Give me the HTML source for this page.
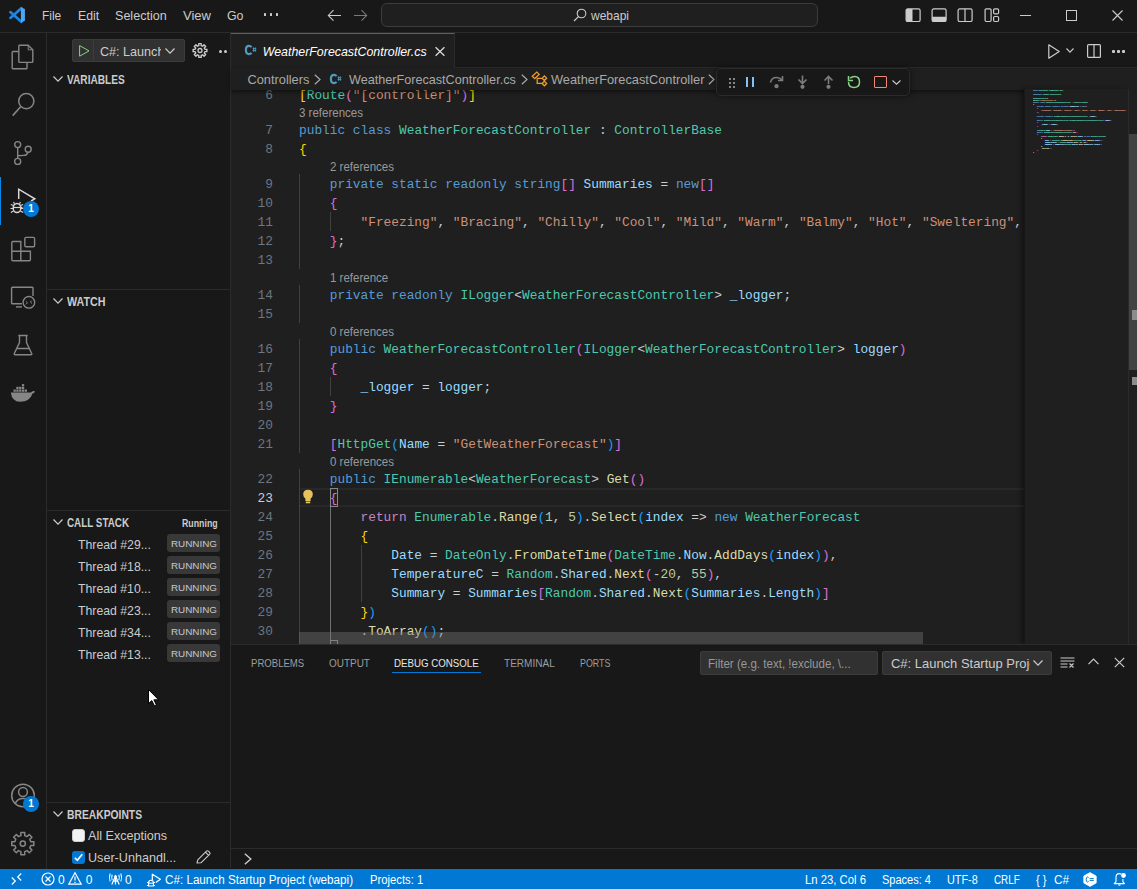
<!DOCTYPE html>
<html><head><meta charset="utf-8"><title>VS Code</title><style>
*{box-sizing:border-box;margin:0;padding:0}
html,body{width:1137px;height:889px;overflow:hidden;background:#181818}
body{position:relative;font-family:"Liberation Sans",sans-serif;color:#cccccc}
.a{position:absolute}
.t{position:absolute;white-space:pre;line-height:1}
svg{position:absolute;overflow:visible}
.code{position:absolute;left:0;white-space:pre;font-family:"Liberation Mono",monospace;font-size:12.82px;line-height:19px;color:#cccccc;height:19px}
.ln{position:absolute;width:40px;text-align:right;font-family:"Liberation Mono",monospace;font-size:12.82px;line-height:19px;color:#6e7681}
.mm{position:absolute;left:0;white-space:pre;font-family:'Liberation Mono',monospace;font-size:1.667px;line-height:2px;height:2px;font-weight:bold;opacity:1;text-shadow:0 0.25px 0 currentColor}
.lens{position:absolute;font-size:11.5px;color:#999999;line-height:16px;white-space:pre}
.k{color:#569cd6}.ty{color:#4ec9b0}.s{color:#ce9178}.v{color:#9cdcfe}.m{color:#dcdcaa}.p{color:#cccccc}
.c{color:#c586c0}.b1{color:#ffd700}.b2{color:#da70d6}.b3{color:#179fff}.n{color:#b5cea8}
</style></head>
<body>
<div class="a" style="left:0;top:0;width:1137px;height:32px;background:#181818"></div>
<div class="a" style="left:0;top:32px;width:1137px;height:1px;background:#2b2b2b"></div>
<svg style="left:0;top:0" width="34" height="30" viewBox="0 0 34 30"><path d="M21.3 8.2L10.4 17.9M21.3 21.8L10.4 12.1" stroke="#1a85e6" stroke-width="2.7" stroke-linecap="round" fill="none"/><path d="M20.9 7.2L24.9 8.9V20.8L20.9 22.7Z" fill="#48a9f2"/></svg>
<div class="t" style="left:42.00px;top:9.96px;font-size:12.8px;color:#cccccc;transform:scaleX(0.9310);transform-origin:0 0;">File</div>
<div class="t" style="left:77.80px;top:9.96px;font-size:12.8px;color:#cccccc;transform:scaleX(0.9612);transform-origin:0 0;">Edit</div>
<div class="t" style="left:115.30px;top:9.96px;font-size:12.8px;color:#cccccc;transform:scaleX(0.9819);transform-origin:0 0;">Selection</div>
<div class="t" style="left:183.00px;top:9.96px;font-size:12.8px;color:#cccccc;transform:scaleX(1.0177);transform-origin:0 0;">View</div>
<div class="t" style="left:226.50px;top:9.96px;font-size:12.8px;color:#cccccc;transform:scaleX(0.9664);transform-origin:0 0;">Go</div>
<div class="a" style="left:264.0px;top:13.4px;width:2.4px;height:2.6px;border-radius:0.6px;background:#cccccc"></div>
<div class="a" style="left:269.9px;top:13.4px;width:2.4px;height:2.6px;border-radius:0.6px;background:#cccccc"></div>
<div class="a" style="left:275.8px;top:13.4px;width:2.4px;height:2.6px;border-radius:0.6px;background:#cccccc"></div>
<svg style="left:327px;top:9px" width="14" height="14" viewBox="0 0 14 14"><path d="M14 6.4H1.5M6.5 1.2L1.3 6.4L6.5 11.6" stroke="#cccccc" stroke-width="1.05" fill="none"/></svg>
<svg style="left:354px;top:9px" width="14" height="14" viewBox="0 0 14 14"><path d="M0 6.4H12.5M7.5 1.2L12.7 6.4L7.5 11.6" stroke="#7a7a7a" stroke-width="1.05" fill="none"/></svg>
<div class="a" style="left:381px;top:3px;width:437px;height:24px;border:1px solid #3c3c3c;border-radius:6px;background:#1f1f1f"></div>
<svg style="left:573px;top:8px" width="14" height="14" viewBox="0 0 14 14"><circle cx="8.5" cy="5.5" r="4.3" stroke="#cccccc" stroke-width="1.1" fill="none"/><path d="M5.4 8.6L1 13" stroke="#cccccc" stroke-width="1.2"/></svg>
<div class="t" style="left:591.40px;top:10.47px;font-size:12.2px;color:#cccccc;transform:scaleX(0.9830);transform-origin:0 0;">webapi</div>
<svg style="left:905px;top:8px" width="16" height="14" viewBox="0 0 16 14"><rect x="1.1" y="0.9" width="14" height="12.6" rx="1.6" stroke="#cccccc" stroke-width="1.2" fill="none"/><path d="M2.5 0.9H7.5V13.5H2.5Q1.1 13.5 1.1 12V2.4Q1.1 0.9 2.5 0.9Z" fill="#cccccc"/></svg>
<svg style="left:931px;top:8px" width="16" height="14" viewBox="0 0 16 14"><rect x="1.1" y="0.9" width="14" height="12.6" rx="1.6" stroke="#cccccc" stroke-width="1.2" fill="none"/><path d="M1.1 8.8H15.1V12Q15.1 13.5 13.6 13.5H2.6Q1.1 13.5 1.1 12Z" fill="#cccccc"/></svg>
<svg style="left:957px;top:8px" width="16" height="14" viewBox="0 0 16 14"><rect x="1.1" y="0.9" width="14" height="12.6" rx="1.6" stroke="#cccccc" stroke-width="1.2" fill="none"/><path d="M8 0.9V13.5" stroke="#cccccc" stroke-width="1.2"/></svg>
<svg style="left:984px;top:8px" width="16" height="14" viewBox="0 0 16 14"><rect x="1.1" y="0.9" width="6" height="12.6" rx="1.2" stroke="#cccccc" stroke-width="1.2" fill="none"/><rect x="9.6" y="0.9" width="5" height="5" rx="1.2" stroke="#cccccc" stroke-width="1.2" fill="none"/><rect x="9.6" y="8.5" width="5" height="5" rx="1.2" stroke="#cccccc" stroke-width="1.2" fill="none"/></svg>
<div class="a" style="left:1020px;top:15px;width:11px;height:1px;background:#cccccc"></div>
<div class="a" style="left:1066px;top:10px;width:11px;height:11px;border:1px solid #cccccc"></div>
<svg style="left:1112px;top:10px" width="11" height="11" viewBox="0 0 11 11"><path d="M0.5 0.5L10.5 10.5M10.5 0.5L0.5 10.5" stroke="#cccccc" stroke-width="1.1"/></svg>
<div class="a" style="left:0;top:33px;width:46px;height:836px;background:#181818"></div>
<div class="a" style="left:46px;top:33px;width:1px;height:836px;background:#2b2b2b"></div>
<svg style="left:0;top:0" width="46" height="889" viewBox="0 0 46 889"><path d="M18 51.5H13Q12.2 51.5 12.2 52.3V68Q12.2 68.8 13 68.8H26.2Q27 68.8 27 68V62.5" stroke="#868686" stroke-width="1.4" fill="none"/><path d="M18.8 45.2H28.2L32.8 49.8V61.6Q32.8 62.4 32 62.4H19.6Q18.8 62.4 18.8 61.6V46Q18.8 45.2 19.6 45.2Z" stroke="#868686" stroke-width="1.4" fill="none"/><path d="M28.2 45.5V49.8H32.5" stroke="#868686" stroke-width="1" fill="none"/><circle cx="26.3" cy="101.1" r="7.6" stroke="#868686" stroke-width="1.5" fill="none"/><path d="M20.6 106.8L12.7 115.6" stroke="#868686" stroke-width="1.6"/><circle cx="17.7" cy="144.6" r="3" stroke="#868686" stroke-width="1.4" fill="none"/><circle cx="28.2" cy="149.2" r="3" stroke="#868686" stroke-width="1.4" fill="none"/><circle cx="17.7" cy="161.4" r="3" stroke="#868686" stroke-width="1.4" fill="none"/><path d="M17.7 147.6V158.4M28 152.2Q27 155.3 24 155.4L17.7 155.8" stroke="#868686" stroke-width="1.4" fill="none"/><path d="M18.7 199V189.2L34.8 198.8L31 201" stroke="#d7d7d7" stroke-width="1.5" fill="none" stroke-linejoin="miter"/><ellipse cx="17" cy="208" rx="3.8" ry="4.6" stroke="#d7d7d7" stroke-width="1.5" fill="none"/><path d="M13.2 207.5H22.5" stroke="#d7d7d7" stroke-width="1.2"/><path d="M10.8 204.5L13.5 205.5M10.8 212.5L13.5 211M23.2 204.5L20.5 205.5M23.2 212.5L20.5 211M10.5 208.5H13M21 208.5H23.5M14.5 203.8L13.5 202M19.5 203.8L20.5 202" stroke="#d7d7d7" stroke-width="1.2"/><path d="M11.8 242.5Q11.8 241.5 12.8 241.5H20.8V251.2H30.4V259.8Q30.4 260.8 29.4 260.8H12.8Q11.8 260.8 11.8 259.8Z M11.8 251.2H20.8V260.8" stroke="#868686" stroke-width="1.4" fill="none"/><rect x="24.8" y="237.4" width="9.8" height="9.4" rx="1.3" stroke="#868686" stroke-width="1.4" fill="none"/><path d="M22 303.8H12.5Q11.6 303.8 11.6 302.9V288Q11.6 287.2 12.5 287.2H32.2Q33 287.2 33 288V296" stroke="#868686" stroke-width="1.4" fill="none"/><path d="M16 306.9H22" stroke="#868686" stroke-width="1.4"/><circle cx="28.9" cy="302.3" r="5.8" stroke="#868686" stroke-width="1.4" fill="#181818"/><path d="M25.8 301.3L27.5 302.8L26 304.3M31.8 300.5L30.3 302L32 303.5" stroke="#868686" stroke-width="1" fill="none"/><path d="M18.3 335.5H27.7M19.5 335.5V342.5L14.3 353.5Q13.8 354.8 15.2 354.8H30.8Q32.2 354.8 31.7 353.5L26.5 342.5V335.5M16.7 348.5H29.3" stroke="#868686" stroke-width="1.4" fill="none"/><path d="M10.8 392.5H31Q32.5 390.3 35 391.2Q34.3 393.3 32.5 393.6Q30 401.8 20 401.8Q12 401.8 10.8 392.5Z" fill="#868686"/><rect x="13.5" y="389.5" width="2.3" height="2.3" fill="#868686"/><rect x="16.3" y="389.5" width="2.3" height="2.3" fill="#868686"/><rect x="19.1" y="389.5" width="2.3" height="2.3" fill="#868686"/><rect x="21.9" y="389.5" width="2.3" height="2.3" fill="#868686"/><rect x="24.7" y="389.5" width="2.3" height="2.3" fill="#868686"/><rect x="16.3" y="386.8" width="2.3" height="2.3" fill="#868686"/><rect x="19.1" y="386.8" width="2.3" height="2.3" fill="#868686"/><rect x="21.9" y="386.8" width="2.3" height="2.3" fill="#868686"/><rect x="21.9" y="384.1" width="2.3" height="2.3" fill="#868686"/><circle cx="23" cy="795.5" r="11.3" stroke="#868686" stroke-width="1.5" fill="none"/><circle cx="23" cy="792" r="4.4" stroke="#868686" stroke-width="1.5" fill="none"/><path d="M15.2 803.8Q17 798.5 23 798.5Q29 798.5 30.8 803.8" stroke="#868686" stroke-width="1.5" fill="none"/><path d="M33.83 841.67 L33.83 845.53 L30.77 845.51 L29.79 847.88 L31.96 850.04 L29.24 852.76 L27.08 850.59 L24.71 851.57 L24.73 854.63 L20.87 854.63 L20.89 851.57 L18.52 850.59 L16.36 852.76 L13.64 850.04 L15.81 847.88 L14.83 845.51 L11.77 845.53 L11.77 841.67 L14.83 841.69 L15.81 839.32 L13.64 837.16 L16.36 834.44 L18.52 836.61 L20.89 835.63 L20.87 832.57 L24.73 832.57 L24.71 835.63 L27.08 836.61 L29.24 834.44 L31.96 837.16 L29.79 839.32 L30.77 841.69 Z" stroke="#868686" stroke-width="1.5" fill="none" stroke-linejoin="round"/><circle cx="22.8" cy="843.6" r="2.6" stroke="#868686" stroke-width="1.5" fill="none"/></svg>
<div class="a" style="left:0;top:177px;width:1px;height:48px;background:#0586e8"></div>
<div class="a" style="left:23px;top:201px;width:16px;height:16px;border-radius:8px;background:#0078d4"></div>
<div class="t" style="left:23px;top:204px;width:16px;text-align:center;font-size:10px;font-weight:bold;color:#ffffff">1</div>
<div class="a" style="left:23px;top:796px;width:16px;height:16px;border-radius:8px;background:#0078d4"></div>
<div class="t" style="left:23px;top:799px;width:16px;text-align:center;font-size:10px;font-weight:bold;color:#ffffff">1</div>
<div class="a" style="left:47px;top:33px;width:183px;height:835px;background:#181818"></div>
<div class="a" style="left:230px;top:33px;width:1px;height:835px;background:#2b2b2b"></div>
<div class="a" style="left:72px;top:39px;width:113px;height:23px;background:#313131;border:1px solid #3c3c3c;border-radius:2px"></div>
<div class="a" style="left:93px;top:40px;width:1px;height:21px;background:#3c3c3c"></div>
<svg style="left:79px;top:45px" width="11" height="12" viewBox="0 0 11 12"><path d="M0.6 0.6V11.2L10 5.9Z" stroke="#89d185" stroke-width="1.0" fill="none" stroke-linejoin="round"/></svg>
<div class="a" style="left:100px;top:40px;width:61px;height:21px;overflow:hidden"><div class="t" style="left:0.00px;top:6.03px;font-size:12.6px;color:#cccccc;">C#: Launch Startup</div></div>
<svg style="left:165px;top:48px" width="10" height="6" viewBox="0 0 10 6"><path d="M0.5 0.5L5.0 5.2L9.5 0.5" stroke="#cccccc" stroke-width="1.2" fill="none"/></svg>
<svg style="left:0;top:0" width="1" height="1"><path d="M206.90 49.30 L206.90 51.70 L204.86 51.67 L204.26 53.11 L205.73 54.53 L204.03 56.23 L202.61 54.76 L201.17 55.36 L201.20 57.40 L198.80 57.40 L198.83 55.36 L197.39 54.76 L195.97 56.23 L194.27 54.53 L195.74 53.11 L195.14 51.67 L193.10 51.70 L193.10 49.30 L195.14 49.33 L195.74 47.89 L194.27 46.47 L195.97 44.77 L197.39 46.24 L198.83 45.64 L198.80 43.60 L201.20 43.60 L201.17 45.64 L202.61 46.24 L204.03 44.77 L205.73 46.47 L204.26 47.89 L204.86 49.33 Z" stroke="#cccccc" stroke-width="1.35" fill="none" stroke-linejoin="round"/><circle cx="200" cy="50.5" r="2" stroke="#cccccc" stroke-width="1.3" fill="none"/></svg>
<div class="a" style="left:219px;top:50px;width:3px;height:3px;border-radius:2px;background:#cccccc"></div>
<div class="a" style="left:224px;top:50px;width:3px;height:3px;border-radius:2px;background:#cccccc"></div>
<svg style="left:53px;top:76px" width="10" height="6" viewBox="0 0 10 6"><path d="M0.5 0.5L5.0 5.2L9.5 0.5" stroke="#cccccc" stroke-width="1.2" fill="none"/></svg>
<div class="t" style="left:67.00px;top:73.84px;font-size:12px;color:#cccccc;font-weight:bold;transform:scaleX(0.8444);transform-origin:0 0;">VARIABLES</div>
<div class="a" style="left:47px;top:289px;width:183px;height:1px;background:#2b2b2b"></div>
<svg style="left:53px;top:298px" width="10" height="6" viewBox="0 0 10 6"><path d="M0.5 0.5L5.0 5.2L9.5 0.5" stroke="#cccccc" stroke-width="1.2" fill="none"/></svg>
<div class="t" style="left:67.00px;top:295.64px;font-size:12px;color:#cccccc;font-weight:bold;transform:scaleX(0.8932);transform-origin:0 0;">WATCH</div>
<div class="a" style="left:47px;top:510px;width:183px;height:1px;background:#2b2b2b"></div>
<svg style="left:53px;top:519px" width="10" height="6" viewBox="0 0 10 6"><path d="M0.5 0.5L5.0 5.2L9.5 0.5" stroke="#cccccc" stroke-width="1.2" fill="none"/></svg>
<div class="t" style="left:67.00px;top:516.94px;font-size:12px;color:#cccccc;font-weight:bold;transform:scaleX(0.8207);transform-origin:0 0;">CALL STACK</div>
<div class="t" style="left:182.40px;top:518.63px;font-size:10px;color:#cccccc;font-weight:bold;transform:scaleX(0.8782);transform-origin:0 0;">Running</div>
<div class="t" style="left:78.00px;top:537.93px;font-size:13.2px;color:#cccccc;transform:scaleX(0.9298);transform-origin:0 0;">Thread #29...</div>
<div class="a" style="left:167px;top:534px;width:53px;height:18px;background:#383838;border-radius:3px"></div>
<div class="t" style="left:170.70px;top:539.47px;font-size:9.6px;color:#c8c8c8;transform:scaleX(1.0268);transform-origin:0 0;">RUNNING</div>
<div class="t" style="left:78.00px;top:559.93px;font-size:13.2px;color:#cccccc;transform:scaleX(0.9298);transform-origin:0 0;">Thread #18...</div>
<div class="a" style="left:167px;top:556px;width:53px;height:18px;background:#383838;border-radius:3px"></div>
<div class="t" style="left:170.70px;top:561.47px;font-size:9.6px;color:#c8c8c8;transform:scaleX(1.0268);transform-origin:0 0;">RUNNING</div>
<div class="t" style="left:78.00px;top:581.93px;font-size:13.2px;color:#cccccc;transform:scaleX(0.9298);transform-origin:0 0;">Thread #10...</div>
<div class="a" style="left:167px;top:578px;width:53px;height:18px;background:#383838;border-radius:3px"></div>
<div class="t" style="left:170.70px;top:583.47px;font-size:9.6px;color:#c8c8c8;transform:scaleX(1.0268);transform-origin:0 0;">RUNNING</div>
<div class="t" style="left:78.00px;top:603.93px;font-size:13.2px;color:#cccccc;transform:scaleX(0.9298);transform-origin:0 0;">Thread #23...</div>
<div class="a" style="left:167px;top:600px;width:53px;height:18px;background:#383838;border-radius:3px"></div>
<div class="t" style="left:170.70px;top:605.47px;font-size:9.6px;color:#c8c8c8;transform:scaleX(1.0268);transform-origin:0 0;">RUNNING</div>
<div class="t" style="left:78.00px;top:625.93px;font-size:13.2px;color:#cccccc;transform:scaleX(0.9298);transform-origin:0 0;">Thread #34...</div>
<div class="a" style="left:167px;top:622px;width:53px;height:18px;background:#383838;border-radius:3px"></div>
<div class="t" style="left:170.70px;top:627.47px;font-size:9.6px;color:#c8c8c8;transform:scaleX(1.0268);transform-origin:0 0;">RUNNING</div>
<div class="t" style="left:78.00px;top:647.93px;font-size:13.2px;color:#cccccc;transform:scaleX(0.9298);transform-origin:0 0;">Thread #13...</div>
<div class="a" style="left:167px;top:644px;width:53px;height:18px;background:#383838;border-radius:3px"></div>
<div class="t" style="left:170.70px;top:649.47px;font-size:9.6px;color:#c8c8c8;transform:scaleX(1.0268);transform-origin:0 0;">RUNNING</div>
<div class="a" style="left:47px;top:802px;width:183px;height:1px;background:#2b2b2b"></div>
<svg style="left:53px;top:811px" width="10" height="6" viewBox="0 0 10 6"><path d="M0.5 0.5L5.0 5.2L9.5 0.5" stroke="#cccccc" stroke-width="1.2" fill="none"/></svg>
<div class="t" style="left:67.00px;top:808.64px;font-size:12px;color:#cccccc;font-weight:bold;transform:scaleX(0.8587);transform-origin:0 0;">BREAKPOINTS</div>
<div class="a" style="left:72px;top:829px;width:13px;height:13px;background:#f3f3f3;border-radius:3px;border:1px solid #cecece"></div>
<div class="t" style="left:88.00px;top:830.13px;font-size:12.6px;color:#cccccc;">All Exceptions</div>
<div class="a" style="left:72px;top:851px;width:13px;height:13px;background:#0078d4;border-radius:3px"></div>
<svg style="left:72px;top:851px" width="13" height="13" viewBox="0 0 13 13"><path d="M2.8 6.8L5.3 9.3L10.3 3.3" stroke="#ffffff" stroke-width="1.6" fill="none"/></svg>
<div class="t" style="left:88.00px;top:852.13px;font-size:12.6px;color:#cccccc;">User-Unhandl...</div>
<svg style="left:196px;top:850px" width="15" height="14" viewBox="0 0 15 14"><path d="M1 13L1.8 9.8L10.5 1.2Q11.5 0.3 12.6 1.3L13.6 2.3Q14.5 3.3 13.6 4.3L4.9 12.8Z M9.5 2.2L12.6 5.3" stroke="#cccccc" stroke-width="1.1" fill="none" stroke-linejoin="round"/></svg>
<svg style="left:147.5px;top:689px" width="12" height="19" viewBox="0 0 12 19"><path d="M0.5 0.5V14.6L3.8 11.6L6.4 16.8L8.4 15.9L5.9 10.8H10.6Z" fill="#ffffff" stroke="#000000" stroke-width="1"/></svg>
<div class="a" style="left:231px;top:33px;width:906px;height:611px;background:#1f1f1f"></div>
<div class="a" style="left:231px;top:89px;width:794px;height:555px;overflow:hidden">
<div class="a" style="left:68px;top:399px;width:726px;height:19px;border-top:2px solid #282828;border-bottom:2px solid #282828"></div>
<div class="a" style="left:68px;top:85px;width:1px;height:19px;background:#404040"></div>
<div class="a" style="left:68px;top:104px;width:1px;height:19px;background:#404040"></div>
<div class="a" style="left:68px;top:123px;width:1px;height:19px;background:#404040"></div>
<div class="a" style="left:68px;top:142px;width:1px;height:19px;background:#404040"></div>
<div class="a" style="left:68px;top:161px;width:1px;height:19px;background:#404040"></div>
<div class="a" style="left:68px;top:196px;width:1px;height:19px;background:#404040"></div>
<div class="a" style="left:68px;top:215px;width:1px;height:19px;background:#404040"></div>
<div class="a" style="left:68px;top:250px;width:1px;height:19px;background:#404040"></div>
<div class="a" style="left:68px;top:269px;width:1px;height:19px;background:#404040"></div>
<div class="a" style="left:68px;top:288px;width:1px;height:19px;background:#404040"></div>
<div class="a" style="left:68px;top:307px;width:1px;height:19px;background:#404040"></div>
<div class="a" style="left:68px;top:326px;width:1px;height:19px;background:#404040"></div>
<div class="a" style="left:68px;top:345px;width:1px;height:19px;background:#404040"></div>
<div class="a" style="left:68px;top:380px;width:1px;height:19px;background:#404040"></div>
<div class="a" style="left:68px;top:399px;width:1px;height:19px;background:#404040"></div>
<div class="a" style="left:68px;top:418px;width:1px;height:19px;background:#404040"></div>
<div class="a" style="left:68px;top:437px;width:1px;height:19px;background:#404040"></div>
<div class="a" style="left:68px;top:456px;width:1px;height:19px;background:#404040"></div>
<div class="a" style="left:68px;top:475px;width:1px;height:19px;background:#404040"></div>
<div class="a" style="left:68px;top:494px;width:1px;height:19px;background:#404040"></div>
<div class="a" style="left:68px;top:513px;width:1px;height:19px;background:#404040"></div>
<div class="a" style="left:68px;top:532px;width:1px;height:19px;background:#404040"></div>
<div class="a" style="left:68px;top:551px;width:1px;height:19px;background:#404040"></div>
<div class="a" style="left:99px;top:123px;width:1px;height:19px;background:#404040"></div>
<div class="a" style="left:99px;top:288px;width:1px;height:19px;background:#404040"></div>
<div class="a" style="left:99px;top:418px;width:1px;height:19px;background:#707070"></div>
<div class="a" style="left:99px;top:437px;width:1px;height:19px;background:#707070"></div>
<div class="a" style="left:99px;top:456px;width:1px;height:19px;background:#707070"></div>
<div class="a" style="left:99px;top:475px;width:1px;height:19px;background:#707070"></div>
<div class="a" style="left:99px;top:494px;width:1px;height:19px;background:#707070"></div>
<div class="a" style="left:99px;top:513px;width:1px;height:19px;background:#707070"></div>
<div class="a" style="left:99px;top:532px;width:1px;height:19px;background:#707070"></div>
<div class="a" style="left:130px;top:456px;width:1px;height:19px;background:#404040"></div>
<div class="a" style="left:130px;top:475px;width:1px;height:19px;background:#404040"></div>
<div class="a" style="left:130px;top:494px;width:1px;height:19px;background:#404040"></div>
<div class="ln" style="left:2px;top:-3px;color:#6e7681">6</div>
<div class="ln" style="left:2px;top:32px;color:#6e7681">7</div>
<div class="ln" style="left:2px;top:51px;color:#6e7681">8</div>
<div class="ln" style="left:2px;top:86px;color:#6e7681">9</div>
<div class="ln" style="left:2px;top:105px;color:#6e7681">10</div>
<div class="ln" style="left:2px;top:124px;color:#6e7681">11</div>
<div class="ln" style="left:2px;top:143px;color:#6e7681">12</div>
<div class="ln" style="left:2px;top:162px;color:#6e7681">13</div>
<div class="ln" style="left:2px;top:197px;color:#6e7681">14</div>
<div class="ln" style="left:2px;top:216px;color:#6e7681">15</div>
<div class="ln" style="left:2px;top:251px;color:#6e7681">16</div>
<div class="ln" style="left:2px;top:270px;color:#6e7681">17</div>
<div class="ln" style="left:2px;top:289px;color:#6e7681">18</div>
<div class="ln" style="left:2px;top:308px;color:#6e7681">19</div>
<div class="ln" style="left:2px;top:327px;color:#6e7681">20</div>
<div class="ln" style="left:2px;top:346px;color:#6e7681">21</div>
<div class="ln" style="left:2px;top:381px;color:#6e7681">22</div>
<div class="ln" style="left:2px;top:400px;color:#cccccc">23</div>
<div class="ln" style="left:2px;top:419px;color:#6e7681">24</div>
<div class="ln" style="left:2px;top:438px;color:#6e7681">25</div>
<div class="ln" style="left:2px;top:457px;color:#6e7681">26</div>
<div class="ln" style="left:2px;top:476px;color:#6e7681">27</div>
<div class="ln" style="left:2px;top:495px;color:#6e7681">28</div>
<div class="ln" style="left:2px;top:514px;color:#6e7681">29</div>
<div class="ln" style="left:2px;top:533px;color:#6e7681">30</div>
<div class="ln" style="left:2px;top:552px;color:#6e7681">31</div>
<div class="code" style="left:68.0px;top:-3px"><span class="b1">[</span><span class="ty">Route</span><span class="b2">(</span><span class="s">&quot;[controller]&quot;</span><span class="b2">)</span><span class="b1">]</span></div>
<div class="code" style="left:68.0px;top:32px"><span class="k">public</span><span class="p"> </span><span class="k">class</span><span class="p"> </span><span class="ty">WeatherForecastController</span><span class="p"> : </span><span class="ty">ControllerBase</span></div>
<div class="code" style="left:68.0px;top:51px"><span class="b1">{</span></div>
<div class="code" style="left:68.0px;top:86px"><span class="p">    </span><span class="k">private</span><span class="p"> </span><span class="k">static</span><span class="p"> </span><span class="k">readonly</span><span class="p"> </span><span class="k">string</span><span class="b2">[]</span><span class="p"> </span><span class="v">Summaries</span><span class="p"> = </span><span class="k">new</span><span class="b2">[]</span></div>
<div class="code" style="left:68.0px;top:105px"><span class="p">    </span><span class="b2">{</span></div>
<div class="code" style="left:68.0px;top:124px"><span class="p">        </span><span class="s">&quot;Freezing&quot;</span><span class="p">, </span><span class="s">&quot;Bracing&quot;</span><span class="p">, </span><span class="s">&quot;Chilly&quot;</span><span class="p">, </span><span class="s">&quot;Cool&quot;</span><span class="p">, </span><span class="s">&quot;Mild&quot;</span><span class="p">, </span><span class="s">&quot;Warm&quot;</span><span class="p">, </span><span class="s">&quot;Balmy&quot;</span><span class="p">, </span><span class="s">&quot;Hot&quot;</span><span class="p">, </span><span class="s">&quot;Sweltering&quot;</span><span class="p">, </span><span class="s">&quot;Scorching&quot;</span></div>
<div class="code" style="left:68.0px;top:143px"><span class="p">    </span><span class="b2">}</span><span class="p">;</span></div>
<div class="code" style="left:68.0px;top:162px"></div>
<div class="code" style="left:68.0px;top:197px"><span class="p">    </span><span class="k">private</span><span class="p"> </span><span class="k">readonly</span><span class="p"> </span><span class="ty">ILogger</span><span class="p">&lt;</span><span class="ty">WeatherForecastController</span><span class="p">&gt;</span><span class="p"> </span><span class="v">_logger</span><span class="p">;</span></div>
<div class="code" style="left:68.0px;top:216px"></div>
<div class="code" style="left:68.0px;top:251px"><span class="p">    </span><span class="k">public</span><span class="p"> </span><span class="ty">WeatherForecastController</span><span class="b2">(</span><span class="ty">ILogger</span><span class="p">&lt;</span><span class="ty">WeatherForecastController</span><span class="p">&gt;</span><span class="p"> </span><span class="v">logger</span><span class="b2">)</span></div>
<div class="code" style="left:68.0px;top:270px"><span class="p">    </span><span class="b2">{</span></div>
<div class="code" style="left:68.0px;top:289px"><span class="p">        </span><span class="v">_logger</span><span class="p"> = </span><span class="v">logger</span><span class="p">;</span></div>
<div class="code" style="left:68.0px;top:308px"><span class="p">    </span><span class="b2">}</span></div>
<div class="code" style="left:68.0px;top:327px"></div>
<div class="code" style="left:68.0px;top:346px"><span class="p">    </span><span class="b2">[</span><span class="ty">HttpGet</span><span class="b3">(</span><span class="v">Name</span><span class="p"> = </span><span class="s">&quot;GetWeatherForecast&quot;</span><span class="b3">)</span><span class="b2">]</span></div>
<div class="code" style="left:68.0px;top:381px"><span class="p">    </span><span class="k">public</span><span class="p"> </span><span class="ty">IEnumerable</span><span class="p">&lt;</span><span class="ty">WeatherForecast</span><span class="p">&gt;</span><span class="p"> </span><span class="m">Get</span><span class="b2">()</span></div>
<div class="code" style="left:68.0px;top:400px"><span class="p">    </span><span class="b2">{</span></div>
<div class="code" style="left:68.0px;top:419px"><span class="p">        </span><span class="c">return</span><span class="p"> </span><span class="ty">Enumerable</span><span class="p">.</span><span class="m">Range</span><span class="b3">(</span><span class="n">1</span><span class="p">, </span><span class="n">5</span><span class="b3">)</span><span class="p">.</span><span class="m">Select</span><span class="b3">(</span><span class="v">index</span><span class="p"> =&gt; </span><span class="k">new</span><span class="p"> </span><span class="ty">WeatherForecast</span></div>
<div class="code" style="left:68.0px;top:438px"><span class="p">        </span><span class="b1">{</span></div>
<div class="code" style="left:68.0px;top:457px"><span class="p">            </span><span class="v">Date</span><span class="p"> = </span><span class="ty">DateOnly</span><span class="p">.</span><span class="m">FromDateTime</span><span class="b2">(</span><span class="ty">DateTime</span><span class="p">.</span><span class="v">Now</span><span class="p">.</span><span class="m">AddDays</span><span class="b3">(</span><span class="v">index</span><span class="b3">)</span><span class="b2">)</span><span class="p">,</span></div>
<div class="code" style="left:68.0px;top:476px"><span class="p">            </span><span class="v">TemperatureC</span><span class="p"> = </span><span class="ty">Random</span><span class="p">.</span><span class="v">Shared</span><span class="p">.</span><span class="m">Next</span><span class="b2">(</span><span class="p">-</span><span class="n">20</span><span class="p">, </span><span class="n">55</span><span class="b2">)</span><span class="p">,</span></div>
<div class="code" style="left:68.0px;top:495px"><span class="p">            </span><span class="v">Summary</span><span class="p"> = </span><span class="v">Summaries</span><span class="b2">[</span><span class="ty">Random</span><span class="p">.</span><span class="v">Shared</span><span class="p">.</span><span class="m">Next</span><span class="b3">(</span><span class="v">Summaries</span><span class="p">.</span><span class="v">Length</span><span class="b3">)</span><span class="b2">]</span></div>
<div class="code" style="left:68.0px;top:514px"><span class="p">        </span><span class="b1">}</span><span class="b3">)</span></div>
<div class="code" style="left:68.0px;top:533px"><span class="p">        </span><span class="p">.</span><span class="m">ToArray</span><span class="b3">()</span><span class="p">;</span></div>
<div class="code" style="left:68.0px;top:552px"><span class="p">    </span><span class="b2">}</span></div>
<div class="t" style="left:68.20px;top:18.03px;font-size:12.6px;color:#999999;transform:scaleX(0.9140);transform-origin:0 0;">3 references</div>
<div class="t" style="left:98.96px;top:72.03px;font-size:12.6px;color:#999999;transform:scaleX(0.9140);transform-origin:0 0;">2 references</div>
<div class="t" style="left:98.96px;top:183.03px;font-size:12.6px;color:#999999;transform:scaleX(0.9140);transform-origin:0 0;">1 reference</div>
<div class="t" style="left:98.96px;top:237.03px;font-size:12.6px;color:#999999;transform:scaleX(0.9140);transform-origin:0 0;">0 references</div>
<div class="t" style="left:98.96px;top:367.03px;font-size:12.6px;color:#999999;transform:scaleX(0.9140);transform-origin:0 0;">0 references</div>
<div class="a" style="left:99px;top:399px;width:8px;height:19px;border:1px solid #888888"></div>
<div class="a" style="left:99px;top:551px;width:8px;height:19px;border:1px solid #888888"></div>
<svg style="left:71px;top:400px" width="12" height="15" viewBox="0 0 12 15"><path d="M6 0.8Q10.8 0.8 10.8 5.4Q10.8 7.8 8.6 9.6V12H3.4V9.6Q1.2 7.8 1.2 5.4Q1.2 0.8 6 0.8Z" fill="#e4c15c"/><rect x="3.8" y="12.5" width="4.4" height="1.8" fill="#e4c15c"/></svg>
<div class="a" style="left:68px;top:543px;width:624px;height:12px;background:rgba(121,121,121,0.4)"></div>
</div>
<div class="a" style="left:231px;top:33px;width:906px;height:35px;background:#181818"></div>
<div class="a" style="left:231px;top:67px;width:906px;height:1px;background:#2b2b2b"></div>
<div class="a" style="left:231px;top:33px;width:224px;height:35px;background:#1f1f1f;border-top:1px solid #0078d4;border-right:1px solid #2b2b2b"></div>
<svg style="left:244px;top:44px" width="14" height="12" viewBox="0 0 14 12"><path d="M7.6 3.1Q6.6 1.9 5 1.9Q1.9 1.9 1.9 6Q1.9 10.1 5 10.1Q6.6 10.1 7.6 8.9" stroke="#519aba" stroke-width="2.2" fill="none"/><path d="M9.5 3.4V7.8M11.3 3.4V7.8M8.6 4.6H12.3M8.6 6.5H12.3" stroke="#519aba" stroke-width="0.9"/></svg>
<div class="t" style="left:262.70px;top:46.00px;font-size:12.4px;color:#ffffff;font-style:italic;">WeatherForecastController.cs</div>
<svg style="left:434.5px;top:46.8px" width="10" height="9" viewBox="0 0 10 9"><path d="M0.6 0.3L9.4 8.7M9.4 0.3L0.6 8.7" stroke="#dddddd" stroke-width="1.25"/></svg>
<svg style="left:1048px;top:44px" width="12" height="15" viewBox="0 0 12 15"><path d="M0.8 0.8V14.2L11.2 7.5Z" stroke="#cccccc" stroke-width="1.2" fill="none" stroke-linejoin="round"/></svg>
<svg style="left:1066px;top:48px" width="8" height="5" viewBox="0 0 8 5"><path d="M0.5 0.5L4.0 4.2L7.5 0.5" stroke="#cccccc" stroke-width="1.1" fill="none"/></svg>
<svg style="left:1087px;top:44px" width="14" height="14" viewBox="0 0 14 14"><rect x="0.6" y="0.6" width="12.8" height="12.8" rx="1" stroke="#cccccc" stroke-width="1.2" fill="none"/><path d="M7 0.6V13.4" stroke="#cccccc" stroke-width="1.2"/></svg>
<div class="a" style="left:1112px;top:50px;width:3px;height:3px;border-radius:1px;background:#cccccc"></div>
<div class="a" style="left:1117px;top:50px;width:3px;height:3px;border-radius:1px;background:#cccccc"></div>
<div class="a" style="left:1122px;top:50px;width:3px;height:3px;border-radius:1px;background:#cccccc"></div>
<div class="a" style="left:231px;top:68px;width:906px;height:22px;background:#1f1f1f;box-shadow:0 2px 4px rgba(0,0,0,0.45)"></div>
<div class="t" style="left:247.50px;top:74.16px;font-size:12.8px;color:#a9a9a9;">Controllers</div>
<svg style="left:314px;top:74px" width="7" height="11" viewBox="0 0 7 11"><path d="M0.8 0.8L6 5.5L0.8 10.2" stroke="#a9a9a9" stroke-width="1.2" fill="none"/></svg>
<svg style="left:329px;top:73px" width="14" height="12" viewBox="0 0 14 12"><path d="M7.6 3.1Q6.6 1.9 5 1.9Q1.9 1.9 1.9 6Q1.9 10.1 5 10.1Q6.6 10.1 7.6 8.9" stroke="#519aba" stroke-width="2.2" fill="none"/><path d="M9.5 3.4V7.8M11.3 3.4V7.8M8.6 4.6H12.3M8.6 6.5H12.3" stroke="#519aba" stroke-width="0.9"/></svg>
<div class="t" style="left:348.50px;top:74.16px;font-size:12.8px;color:#a9a9a9;transform:scaleX(0.9866);transform-origin:0 0;">WeatherForecastController.cs</div>
<svg style="left:521px;top:74px" width="7" height="11" viewBox="0 0 7 11"><path d="M0.8 0.8L6 5.5L0.8 10.2" stroke="#a9a9a9" stroke-width="1.2" fill="none"/></svg>
<svg style="left:528px;top:68px" width="24" height="22" viewBox="0 0 24 22"><path d="M4.3 8.3L8.8 4.1L11.2 6.4L6.7 10.6Z M9.2 10.3H14.3 M9.2 10.3V15.3H14.3 M16.4 7.9L18.7 10.2L16.4 12.5L14.1 10.2Z M16.4 13.2L18.7 15.5L16.4 17.8L14.1 15.5Z" stroke="#ee9d28" stroke-width="1.3" fill="none" stroke-linejoin="miter"/></svg>
<div class="t" style="left:551.00px;top:74.16px;font-size:12.8px;color:#a9a9a9;">WeatherForecastController</div>
<svg style="left:708px;top:74px" width="7" height="11" viewBox="0 0 7 11"><path d="M0.8 0.8L6 5.5L0.8 10.2" stroke="#a9a9a9" stroke-width="1.2" fill="none"/></svg>
<div class="a" style="left:716px;top:68px;width:194px;height:28px;background:#181818;border:1px solid #2b2b2b;border-radius:5px;box-shadow:0 0 6px rgba(0,0,0,0.5)"></div>
<div class="a" style="left:729px;top:78px;width:2px;height:2px;background:#858585"></div>
<div class="a" style="left:729px;top:82px;width:2px;height:2px;background:#858585"></div>
<div class="a" style="left:729px;top:86px;width:2px;height:2px;background:#858585"></div>
<div class="a" style="left:733px;top:78px;width:2px;height:2px;background:#858585"></div>
<div class="a" style="left:733px;top:82px;width:2px;height:2px;background:#858585"></div>
<div class="a" style="left:733px;top:86px;width:2px;height:2px;background:#858585"></div>
<div class="a" style="left:746px;top:77px;width:2px;height:10px;background:#86c1f2"></div>
<div class="a" style="left:752px;top:77px;width:2px;height:10px;background:#86c1f2"></div>
<svg style="left:769px;top:75px" width="15" height="14" viewBox="0 0 15 14"><path d="M1.5 7.5Q2.5 2.5 7.5 2.5Q11 2.5 13 5M13.5 1V5.5H9" stroke="#7c7c7c" stroke-width="1.6" fill="none"/><circle cx="7.5" cy="11.2" r="2.1" fill="#7c7c7c"/></svg>
<svg style="left:797px;top:75px" width="11" height="14" viewBox="0 0 11 14"><path d="M5.5 0.5V8M1.5 4.5L5.5 8.5L9.5 4.5" stroke="#7c7c7c" stroke-width="1.6" fill="none"/><circle cx="5.5" cy="11.8" r="2.1" fill="#7c7c7c"/></svg>
<svg style="left:823px;top:75px" width="11" height="14" viewBox="0 0 11 14"><path d="M5.5 9V1.5M1.5 5.5L5.5 1.5L9.5 5.5" stroke="#7c7c7c" stroke-width="1.6" fill="none"/><circle cx="5.5" cy="11.8" r="2.1" fill="#7c7c7c"/></svg>
<svg style="left:847px;top:75px" width="14" height="14" viewBox="0 0 14 14"><path d="M3 3.2Q5 1.5 7.5 1.5Q12.5 1.5 12.5 7Q12.5 12.5 7 12.5Q1.5 12.5 1.5 7M1.5 1V5.5H6" stroke="#89d185" stroke-width="1.5" fill="none"/></svg>
<div class="a" style="left:874px;top:76px;width:13px;height:12px;border:1.5px solid #f48771;border-radius:1px"></div>
<svg style="left:892px;top:80px" width="9" height="5" viewBox="0 0 9 5"><path d="M0.5 0.5L4.5 4.2L8.5 0.5" stroke="#cccccc" stroke-width="1.1" fill="none"/></svg>
<div class="a" style="left:1024px;top:89px;width:104px;height:555px;background:#1f1f1f;border-left:1px solid #171717;box-shadow:-3px 0 4px rgba(0,0,0,0.35)"></div>
<div class="a" style="left:1033px;top:89px;width:94px;height:555px;overflow:hidden">
<div class="mm" style="top:0.7px"><span class="k">using</span><span class="p"> </span><span class="ty">Microsoft.AspNetCore.Mvc;</span></div>
<div class="mm" style="top:4.7px"><span class="k">namespace</span><span class="p"> </span><span class="ty">webapi.Controllers;</span></div>
<div class="mm" style="top:8.7px"><span class="b1">[</span><span class="ty">ApiController</span><span class="b1">]</span></div>
<div class="mm" style="top:10.7px"><span class="b1">[</span><span class="ty">Route</span><span class="b2">(</span><span class="s">&quot;[controller]&quot;</span><span class="b2">)</span><span class="b1">]</span></div>
<div class="mm" style="top:12.7px"><span class="k">public</span><span class="p"> </span><span class="k">class</span><span class="p"> </span><span class="ty">WeatherForecastController</span><span class="p"> : </span><span class="ty">ControllerBase</span></div>
<div class="mm" style="top:14.7px"><span class="b1">{</span></div>
<div class="mm" style="top:16.7px"><span class="p">    </span><span class="k">private</span><span class="p"> </span><span class="k">static</span><span class="p"> </span><span class="k">readonly</span><span class="p"> </span><span class="k">string</span><span class="b2">[]</span><span class="p"> </span><span class="v">Summaries</span><span class="p"> = </span><span class="k">new</span><span class="b2">[]</span></div>
<div class="mm" style="top:18.7px"><span class="p">    </span><span class="b2">{</span></div>
<div class="mm" style="top:20.7px"><span class="p">        </span><span class="s">&quot;Freezing&quot;</span><span class="p">, </span><span class="s">&quot;Bracing&quot;</span><span class="p">, </span><span class="s">&quot;Chilly&quot;</span><span class="p">, </span><span class="s">&quot;Cool&quot;</span><span class="p">, </span><span class="s">&quot;Mild&quot;</span><span class="p">, </span><span class="s">&quot;Warm&quot;</span><span class="p">, </span><span class="s">&quot;Balmy&quot;</span><span class="p">, </span><span class="s">&quot;Hot&quot;</span><span class="p">, </span><span class="s">&quot;Sweltering&quot;</span><span class="p">, </span><span class="s">&quot;Scorching&quot;</span></div>
<div class="mm" style="top:22.7px"><span class="p">    </span><span class="b2">}</span><span class="p">;</span></div>
<div class="mm" style="top:24.7px"></div>
<div class="mm" style="top:26.7px"><span class="p">    </span><span class="k">private</span><span class="p"> </span><span class="k">readonly</span><span class="p"> </span><span class="ty">ILogger</span><span class="p">&lt;</span><span class="ty">WeatherForecastController</span><span class="p">&gt;</span><span class="p"> </span><span class="v">_logger</span><span class="p">;</span></div>
<div class="mm" style="top:28.7px"></div>
<div class="mm" style="top:30.7px"><span class="p">    </span><span class="k">public</span><span class="p"> </span><span class="ty">WeatherForecastController</span><span class="b2">(</span><span class="ty">ILogger</span><span class="p">&lt;</span><span class="ty">WeatherForecastController</span><span class="p">&gt;</span><span class="p"> </span><span class="v">logger</span><span class="b2">)</span></div>
<div class="mm" style="top:32.7px"><span class="p">    </span><span class="b2">{</span></div>
<div class="mm" style="top:34.7px"><span class="p">        </span><span class="v">_logger</span><span class="p"> = </span><span class="v">logger</span><span class="p">;</span></div>
<div class="mm" style="top:36.7px"><span class="p">    </span><span class="b2">}</span></div>
<div class="mm" style="top:38.7px"></div>
<div class="mm" style="top:40.7px"><span class="p">    </span><span class="b2">[</span><span class="ty">HttpGet</span><span class="b3">(</span><span class="v">Name</span><span class="p"> = </span><span class="s">&quot;GetWeatherForecast&quot;</span><span class="b3">)</span><span class="b2">]</span></div>
<div class="mm" style="top:42.7px"><span class="p">    </span><span class="k">public</span><span class="p"> </span><span class="ty">IEnumerable</span><span class="p">&lt;</span><span class="ty">WeatherForecast</span><span class="p">&gt;</span><span class="p"> </span><span class="m">Get</span><span class="b2">()</span></div>
<div class="mm" style="top:44.7px"><span class="p">    </span><span class="b2">{</span></div>
<div class="mm" style="top:46.7px"><span class="p">        </span><span class="c">return</span><span class="p"> </span><span class="ty">Enumerable</span><span class="p">.</span><span class="m">Range</span><span class="b3">(</span><span class="n">1</span><span class="p">, </span><span class="n">5</span><span class="b3">)</span><span class="p">.</span><span class="m">Select</span><span class="b3">(</span><span class="v">index</span><span class="p"> =&gt; </span><span class="k">new</span><span class="p"> </span><span class="ty">WeatherForecast</span></div>
<div class="mm" style="top:48.7px"><span class="p">        </span><span class="b1">{</span></div>
<div class="mm" style="top:50.7px"><span class="p">            </span><span class="v">Date</span><span class="p"> = </span><span class="ty">DateOnly</span><span class="p">.</span><span class="m">FromDateTime</span><span class="b2">(</span><span class="ty">DateTime</span><span class="p">.</span><span class="v">Now</span><span class="p">.</span><span class="m">AddDays</span><span class="b3">(</span><span class="v">index</span><span class="b3">)</span><span class="b2">)</span><span class="p">,</span></div>
<div class="mm" style="top:52.7px"><span class="p">            </span><span class="v">TemperatureC</span><span class="p"> = </span><span class="ty">Random</span><span class="p">.</span><span class="v">Shared</span><span class="p">.</span><span class="m">Next</span><span class="b2">(</span><span class="p">-</span><span class="n">20</span><span class="p">, </span><span class="n">55</span><span class="b2">)</span><span class="p">,</span></div>
<div class="mm" style="top:54.7px"><span class="p">            </span><span class="v">Summary</span><span class="p"> = </span><span class="v">Summaries</span><span class="b2">[</span><span class="ty">Random</span><span class="p">.</span><span class="v">Shared</span><span class="p">.</span><span class="m">Next</span><span class="b3">(</span><span class="v">Summaries</span><span class="p">.</span><span class="v">Length</span><span class="b3">)</span><span class="b2">]</span></div>
<div class="mm" style="top:56.7px"><span class="p">        </span><span class="b1">}</span><span class="b3">)</span></div>
<div class="mm" style="top:58.7px"><span class="p">        </span><span class="p">.</span><span class="m">ToArray</span><span class="b3">()</span><span class="p">;</span></div>
<div class="mm" style="top:60.7px"><span class="p">    </span><span class="b2">}</span></div>
<div class="mm" style="top:62.7px"><span class="b1">}</span></div>
</div>
<div class="a" style="left:1128px;top:89px;width:9px;height:555px;background:#1f1f1f;border-left:1px solid #2b2b2b"></div>
<div class="a" style="left:1129px;top:134px;width:8px;height:236px;background:rgba(121,121,121,0.4)"></div>
<div class="a" style="left:1132px;top:310px;width:5px;height:10px;background:#8c8c8c"></div>
<div class="a" style="left:1132px;top:377px;width:5px;height:8px;background:#8c8c8c"></div>
<div class="a" style="left:231px;top:644px;width:906px;height:224px;background:#181818;border-top:1px solid #2b2b2b"></div>
<div class="t" style="left:251.40px;top:657.72px;font-size:11.2px;color:#9d9d9d;transform:scaleX(0.8564);transform-origin:0 0;">PROBLEMS</div>
<div class="t" style="left:329.00px;top:657.72px;font-size:11.2px;color:#9d9d9d;transform:scaleX(0.8905);transform-origin:0 0;">OUTPUT</div>
<div class="t" style="left:394.40px;top:657.72px;font-size:11.2px;color:#e7e7e7;transform:scaleX(0.8679);transform-origin:0 0;">DEBUG CONSOLE</div>
<div class="t" style="left:504.00px;top:657.72px;font-size:11.2px;color:#9d9d9d;transform:scaleX(0.8971);transform-origin:0 0;">TERMINAL</div>
<div class="t" style="left:579.50px;top:657.72px;font-size:11.2px;color:#9d9d9d;transform:scaleX(0.7947);transform-origin:0 0;">PORTS</div>
<div class="a" style="left:392px;top:672px;width:89px;height:1px;background:#0078d4"></div>
<div class="a" style="left:700px;top:651px;width:178px;height:24px;background:#313131;border:1px solid #3c3c3c;border-radius:2px"></div>
<div class="t" style="left:707.70px;top:658.19px;font-size:12.3px;color:#989898;transform:scaleX(0.9404);transform-origin:0 0;">Filter (e.g. text, !exclude, \...</div>
<div class="a" style="left:882px;top:651px;width:170px;height:24px;background:#313131;border:1px solid #3c3c3c;border-radius:2px"></div>
<div class="a" style="left:890px;top:652px;width:140px;height:22px;overflow:hidden"><div class="t" style="left:0.50px;top:5.93px;font-size:12.6px;color:#cccccc;transform:scaleX(1.0292);transform-origin:0 0;">C#: Launch Startup Project</div></div>
<svg style="left:1033px;top:660px" width="10" height="6" viewBox="0 0 10 6"><path d="M0.5 0.5L5 5.2L9.5 0.5" stroke="#cccccc" stroke-width="1.2" fill="none"/></svg>
<svg style="left:1060px;top:657px" width="15" height="12" viewBox="0 0 15 12"><path d="M0.5 1H14.5M0.5 4H14.5M0.5 7H7.5M0.5 10H7.5M9.5 6.5L13.5 10.5M13.5 6.5L9.5 10.5" stroke="#cccccc" stroke-width="1.1" fill="none"/></svg>
<svg style="left:1088px;top:658px" width="11" height="7" viewBox="0 0 11 7"><path d="M0.5 6.2L5.5 1L10.5 6.2" stroke="#cccccc" stroke-width="1.2" fill="none"/></svg>
<svg style="left:1114px;top:657px" width="11" height="11" viewBox="0 0 11 11"><path d="M0.8 0.8L10.2 10.2M10.2 0.8L0.8 10.2" stroke="#cccccc" stroke-width="1.2"/></svg>
<div class="a" style="left:231px;top:848px;width:906px;height:1px;background:#2b2b2b"></div>
<svg style="left:244px;top:853px" width="8" height="12" viewBox="0 0 8 12"><path d="M0.8 0.8L6.8 6L0.8 11.2" stroke="#cccccc" stroke-width="1.4" fill="none"/></svg>
<div class="a" style="left:0;top:869px;width:1137px;height:20px;background:#0078d4"></div>
<svg style="left:11px;top:873px" width="11" height="12" viewBox="0 0 11 12"><path d="M0.8 4.5L4.3 8L0.8 11.5M10.2 0.5L6.7 4L10.2 7.5" stroke="#ffffff" stroke-width="1.2" fill="none"/></svg>
<svg style="left:41px;top:872px" width="14" height="14" viewBox="0 0 14 14"><circle cx="7" cy="7" r="6" stroke="#ffffff" stroke-width="1.2" fill="none"/><path d="M4.5 4.5L9.5 9.5M9.5 4.5L4.5 9.5" stroke="#ffffff" stroke-width="1.2"/></svg>
<div class="t" style="left:58.00px;top:874.04px;font-size:12px;color:#ffffff;">0</div>
<svg style="left:68px;top:872px" width="14" height="13" viewBox="0 0 14 13"><path d="M7 0.8L13.2 12.2H0.8Z M7 4.5V8.5M7 9.8V11" stroke="#ffffff" stroke-width="1.2" fill="none"/></svg>
<div class="t" style="left:85.80px;top:874.04px;font-size:12px;color:#ffffff;">0</div>
<svg style="left:0;top:0" width="1" height="1"><path d="M115.5 876V884.5M111.8 884.5L115.5 876L119.2 884.5M113 881.2H118" stroke="#ffffff" stroke-width="1.2" fill="none"/><path d="M110.2 873.5Q108.6 877.5 110.2 881.5M120.8 873.5Q122.4 877.5 120.8 881.5M112.2 874.8Q111.2 877.5 112.2 880.2M118.8 874.8Q119.8 877.5 118.8 880.2" stroke="#ffffff" stroke-width="1.1" fill="none"/><circle cx="115.5" cy="876.5" r="1.3" fill="#ffffff"/></svg>
<div class="t" style="left:125.00px;top:874.04px;font-size:12px;color:#ffffff;">0</div>
<svg style="left:0;top:0" width="1" height="1"><path d="M152.3 880V874.2L160.4 879.2L155.8 882.4" stroke="#ffffff" stroke-width="1.2" fill="none" stroke-linejoin="round"/><path d="M148.6 886V883Q148.6 880.3 151 880.3Q153.4 880.3 153.4 883V886Z" stroke="#ffffff" stroke-width="1.1" fill="none"/><path d="M147 882.5H148.6M147 885.5H148.6M153.4 882.5H155M153.4 885.5H155M148.6 883.2H153.4" stroke="#ffffff" stroke-width="1"/></svg>
<div class="t" style="left:165.00px;top:874.04px;font-size:12px;color:#ffffff;transform:scaleX(0.9720);transform-origin:0 0;">C#: Launch Startup Project (webapi)</div>
<div class="t" style="left:369.50px;top:874.04px;font-size:12px;color:#ffffff;transform:scaleX(0.9385);transform-origin:0 0;">Projects: 1</div>
<div class="t" style="left:804.60px;top:874.04px;font-size:12px;color:#ffffff;transform:scaleX(0.9427);transform-origin:0 0;">Ln 23, Col 6</div>
<div class="t" style="left:881.50px;top:874.04px;font-size:12px;color:#ffffff;transform:scaleX(0.9182);transform-origin:0 0;">Spaces: 4</div>
<div class="t" style="left:947.00px;top:874.04px;font-size:12px;color:#ffffff;transform:scaleX(0.9031);transform-origin:0 0;">UTF-8</div>
<div class="t" style="left:993.80px;top:874.04px;font-size:12px;color:#ffffff;transform:scaleX(0.8202);transform-origin:0 0;">CRLF</div>
<div class="t" style="left:1035.60px;top:874.04px;font-size:12px;color:#ffffff;transform:scaleX(0.9162);transform-origin:0 0;">{ }</div>
<div class="t" style="left:1054.00px;top:874.04px;font-size:12px;color:#ffffff;transform:scaleX(0.9779);transform-origin:0 0;">C#</div>
<svg style="left:1083px;top:872px" width="14" height="15" viewBox="0 0 14 15"><path d="M7 0.6L13.2 4.1V10.9L7 14.4L0.8 10.9V4.1Z" fill="#ffffff" stroke="#ffffff" stroke-width="0.8" stroke-linejoin="round"/><path d="M5.6 5.6Q5.1 5 4.4 5Q3.2 5 3.2 7.5Q3.2 10 4.4 10Q5.1 10 5.6 9.4" stroke="#0078d4" stroke-width="1" fill="none"/><path d="M6.6 6.6H10.8M6.6 8.4H10.8" stroke="#0078d4" stroke-width="1"/></svg>
<svg style="left:1113px;top:872px" width="14" height="15" viewBox="0 0 14 15"><path d="M8.5 2.3Q7.8 1.6 6.3 1.6Q3 1.6 3 5.5V9.6L1.3 11.6H11.5L9.9 9.6V7" stroke="#ffffff" stroke-width="1.1" fill="none" stroke-linejoin="round"/><path d="M5 12.6Q5.3 13.8 6.4 13.8Q7.5 13.8 7.8 12.6Z" fill="#ffffff"/><circle cx="10.5" cy="3.5" r="2.4" fill="#ffffff"/></svg>
</body></html>
